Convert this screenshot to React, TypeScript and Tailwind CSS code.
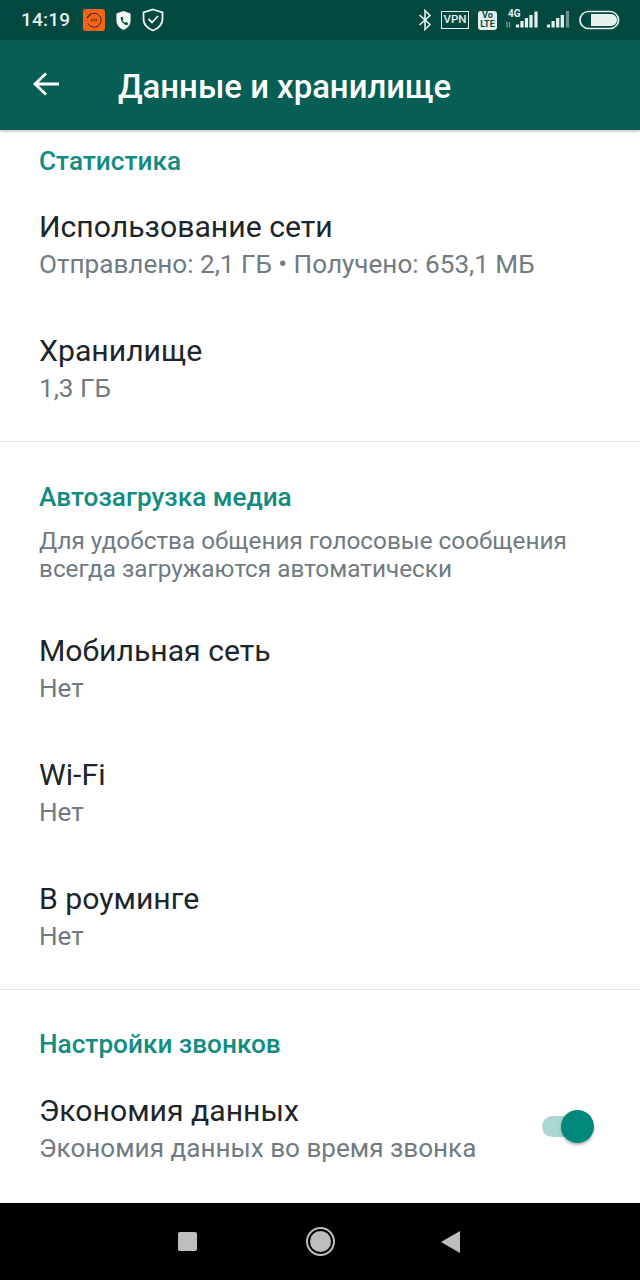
import React from "react";

function Row({ title, sub, right }: { title: string; sub: string; right?: React.ReactNode }) {
  return (
    <div className="h-[124px] flex items-center justify-between pl-[39px] pr-[46px]">
      <div className="flex flex-col">
        <div className="text-[30.2px] leading-[36px] text-[#1c2529]">{title}</div>
        <div className="text-[26.1px] leading-[38px] text-[#6f7b81]">{sub}</div>
      </div>
      {right}
    </div>
  );
}

function Header({ children }: { children: React.ReactNode }) {
  return <div className="text-[26.2px] leading-[32px] font-medium text-[#128c7e] pl-[39px]">{children}</div>;
}

function Signal4G() {
  return (
    <svg className="ml-[9px]" width="33" height="24" viewBox="0 0 33 24">
      <text x="2" y="8.7" fontSize="10" fontWeight="700" fill="#e6f0ee" fontFamily="Roboto, sans-serif">4G</text>
      <path d="M1 14 V19.5 M3.5 14 V19.5" stroke="#7c9a94" strokeWidth="1.3" />
      <path d="M11.5 19.5 V16.5 M16 19.5 V13 M20.5 19.5 V10 M25 19.5 V7 M30 19.5 V3.5" stroke="#e6f0ee" strokeWidth="3.2" />
    </svg>
  );
}

function StatusBar() {
  return (
    <div className="h-10 bg-[#03493f] flex items-center justify-between pl-[21px] pr-[20px] text-[#e6f0ee]">
      <div className="flex items-center">
        <span className="text-[19px] font-medium tracking-[0.2px] w-[62px]">14:19</span>
        <svg width="22" height="22" viewBox="0 0 22 22">
          <rect width="22" height="22" rx="3" fill="#f4651a" />
          <path d="M6.5 6 A7 7 0 1 1 5 14.5" fill="none" stroke="#4a2410" strokeWidth="1" />
          <path d="M4 9 L7.5 5" stroke="#4a2410" strokeWidth="1.2" />
          <path d="M8 10.2 H14 M8 11.8 H14" stroke="#5a2a10" strokeWidth="1" strokeDasharray="1.5 0.8" />
        </svg>
        <svg className="ml-[10px]" width="17" height="21" viewBox="0 0 18 22">
          <path d="M9 1 L16.5 3.5 V11 C16.5 16 13 19.5 9 21 C5 19.5 1.5 16 1.5 11 V3.5 Z" fill="#f2f7f6" />
          <path d="M6 7.5 L8 7 L9 9.5 L8 10.5 C8.5 12 9.5 13 10.5 13.5 L11.8 12.5 L14 14 L13 16 C9.5 16 6 12 6 7.5 Z" fill="#03493f" />
        </svg>
        <svg className="ml-[10px]" width="22" height="24" viewBox="0 0 22 24" fill="none" stroke="#f2f7f6" strokeWidth="1.8">
          <path d="M11 1.5 L20.5 4.5 V11 C20.5 16.5 16 20.5 11 22.5 C6 20.5 1.5 16.5 1.5 11 V4.5 Z" />
          <path d="M6.5 11 L10 14.5 L16 8" />
        </svg>
      </div>
      <div className="flex items-center">
        <svg width="14" height="22" viewBox="0 0 14 22" fill="none" stroke="#e6f0ee" strokeWidth="1.6">
          <path d="M1.5 6 L12 15.5 L7 20.5 V1.5 L12 6.5 L1.5 16" />
        </svg>
        <span className="ml-[9px] w-[28px] h-[18px] border-[1.5px] border-[#e6f0ee] flex items-center justify-center text-[11.5px] font-medium leading-none">VPN</span>
        <span className="ml-[9px] w-[19px] h-[19px] bg-[#e6f0ee] rounded-[3px] flex flex-col items-center justify-center text-[#03493f] text-[9px] font-bold leading-[9px]">
          <span>Vo</span>
          <span>LTE</span>
        </span>
        <Signal4G />
        <svg className="ml-[7px]" width="24" height="20" viewBox="0 0 24 20">
          <path d="M2.5 17.5 V14.5 M7.1 17.5 V11 M11.7 17.5 V8 M16.3 17.5 V5" stroke="#e6f0ee" strokeWidth="3.2" />
          <path d="M21.5 17.5 V1" stroke="#6d918a" strokeWidth="3.2" />
        </svg>
        <svg className="ml-[9px]" width="41" height="20" viewBox="0 0 41 20">
          <rect x="1" y="1.5" width="38.5" height="17" rx="8.5" fill="none" stroke="#e6f0ee" strokeWidth="1.7" />
          <path d="M12 4 H32 A6 6 0 0 1 32 16 H12 Z" fill="#e6f0ee" />
        </svg>
      </div>
    </div>
  );
}

function Toolbar() {
  return (
    <div className="relative z-10 h-[90px] bg-[#075e54] flex items-center pl-[32px] shadow-[0_1px_3px_rgba(0,0,0,0.3)]">
      <svg className="-mt-[2px]" width="28" height="28" viewBox="0 0 28 28" fill="none" stroke="#ffffff" strokeWidth="2.8">
        <path d="M27 14 H3 M14 3.5 L3 14 L14 24.5" />
      </svg>
      <div className="ml-[58px] mt-[4px] text-[32.9px] font-medium text-white leading-none">Данные и хранилище</div>
    </div>
  );
}

function NavBar() {
  return (
    <div className="h-[77px] bg-black relative flex items-center">
      <div className="ml-[178px] w-[19px] h-[19px] rounded-[2px] bg-[#bdbdbd]" />
      <div className="ml-[109px] w-[29px] h-[29px] rounded-full border-2 border-[#bdbdbd] flex items-center justify-center">
        <div className="w-[21px] h-[21px] rounded-full bg-[#bdbdbd]" />
      </div>
      <svg className="ml-[106px]" width="20" height="22" viewBox="0 0 20 22">
        <path d="M0 11 L19 0 V22 Z" fill="#bdbdbd" />
      </svg>
    </div>
  );
}

export default function App() {
  return (
    <div className="w-[640px] h-[1280px] flex flex-col bg-white overflow-hidden font-['Roboto',sans-serif]">
      <StatusBar />
      <Toolbar />
      <div className="flex-1 flex flex-col">
        <div className="pt-[15px]">
          <Header>Статистика</Header>
        </div>
        <div className="mt-[7px] mb-[9px]">
          <Row title="Использование сети" sub="Отправлено: 2,1 ГБ • Получено: 653,1 МБ" />
          <Row title="Хранилище" sub="1,3 ГБ" />
        </div>
        <div className="h-px bg-[#e7e9ea]" />
        <div className="pt-[39px]">
          <Header>Автозагрузка медиа</Header>
          <div className="pl-[39px] pt-[14px] text-[24.3px] leading-[28px] text-[#6f7b81]">
            Для удобства общения голосовые сообщения
            <br />
            всегда загружаются автоматически
          </div>
        </div>
        <div className="mt-[25px] mb-[9px]">
          <Row title="Мобильная сеть" sub="Нет" />
          <Row title="Wi-Fi" sub="Нет" />
          <Row title="В роуминге" sub="Нет" />
        </div>
        <div className="h-px bg-[#e7e9ea]" />
        <div className="pt-[38px]">
          <Header>Настройки звонков</Header>
        </div>
        <div className="mt-[8px]">
          <Row
            title="Экономия данных"
            sub="Экономия данных во время звонка"
            right={
              <div className="relative -mt-[7px] w-[52px] h-[33px] flex items-center">
                <div className="w-[40px] h-[21px] rounded-full bg-[#aad7d2]" />
                <div className="absolute right-0 top-0 w-[33px] h-[33px] rounded-full bg-[#00897b] shadow-[0_2px_3px_rgba(0,0,0,0.3)]" />
              </div>
            }
          />
        </div>
      </div>
      <NavBar />
    </div>
  );
}
